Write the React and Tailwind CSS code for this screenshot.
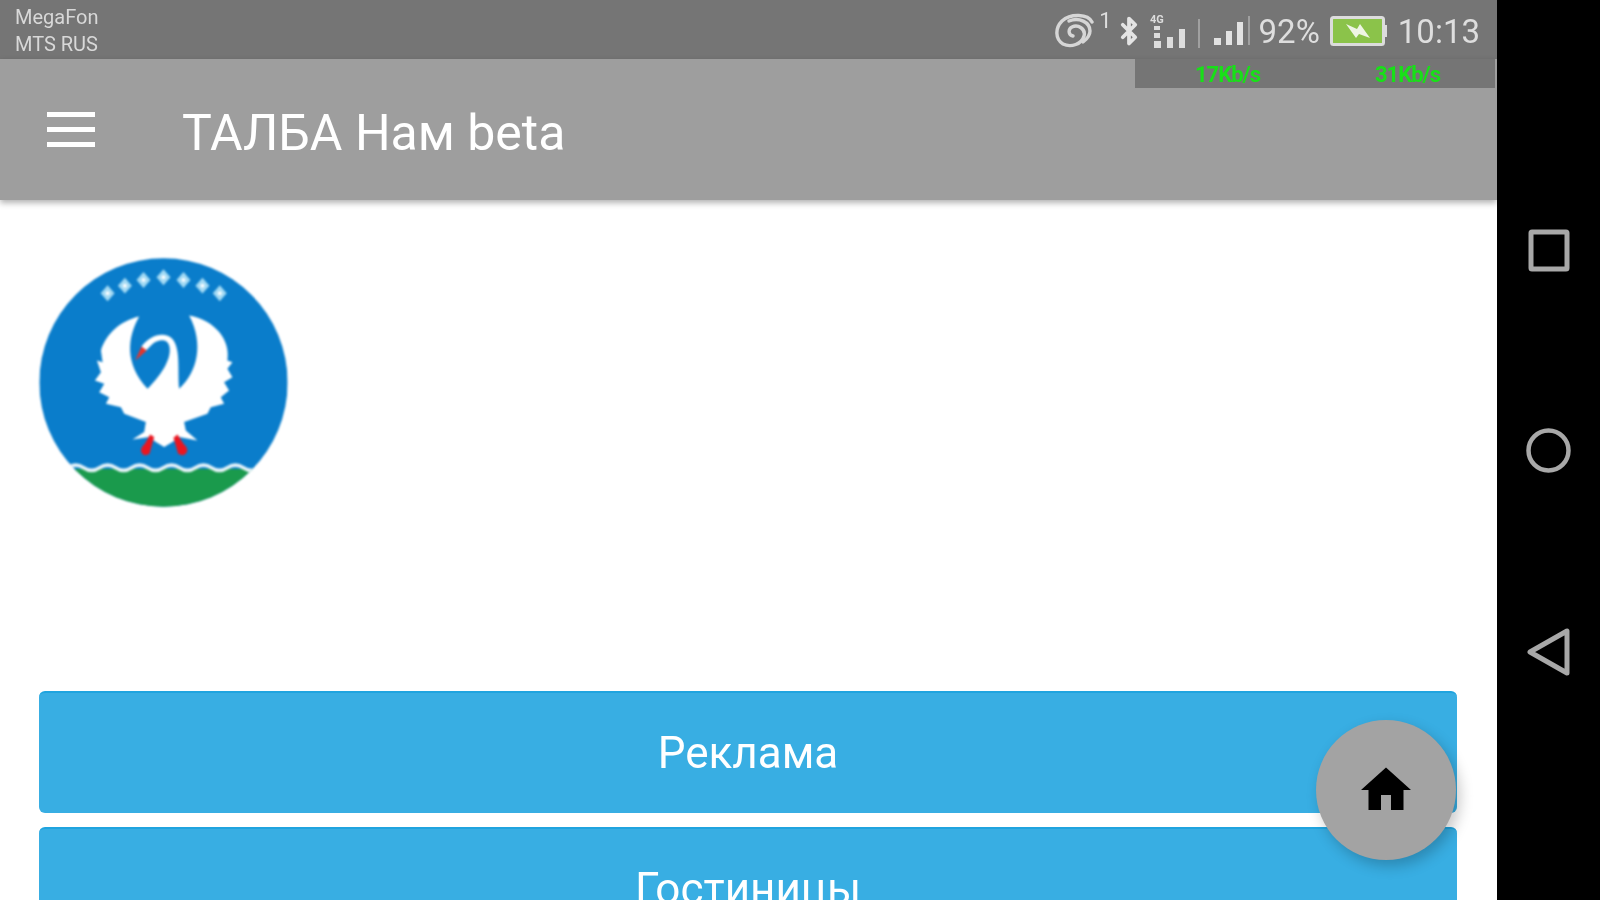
import { Bluetooth } from "lucide-react";

const diamonds = [
  [260, 158],
  [312, 135],
  [368, 118],
  [428, 110],
  [488, 118],
  [545, 135],
  [597, 158],
];

function Emblem() {
  return (
    <svg viewBox="55 52 746 748" className="w-[249px] h-[249px] shrink-0 blur-[0.8px]">
      <defs>
        <clipPath id="disc">
          <circle cx="428" cy="426" r="373" />
        </clipPath>
      </defs>
      <g clipPath="url(#disc)">
        <rect x="55" y="52" width="746" height="748" fill="#0a7dcb" />
        <rect x="55" y="686" width="746" height="120" fill="#1a9a4c" />
        <path
          d="M140 682q24-16 48 0t48 0 48 0 48 0 48 0 48 0 48 0 48 0 48 0 48 0 48 0 48 0 48 0"
          fill="none"
          stroke="#e8f4fa"
          strokeWidth="11"
        />
      </g>
      {diamonds.map(([x, y]) => (
        <g key={x}>
          <path d={`M${x} ${y - 24}L${x + 21} ${y}L${x} ${y + 24}L${x - 21} ${y}Z`} fill="#a3daf4" />
          <circle cx={x} cy={y} r="6" fill="#ffffff" />
        </g>
      ))}
      <path
        d="M355 228C300 240 255 280 240 330L245 365L228 360L240 395L222 420L250 430L235 455L265 470L255 490L300 500L310 520L375 545L370 575L335 597L385 590L405 605L430 620L455 605L475 590L530 600L495 570L490 545L560 520L570 500L610 490L600 470L625 450L610 425L635 410L620 385L635 365L620 360C630 300 585 240 505 225C550 310 530 395 475 445C470 390 480 325 455 295C430 270 385 285 362 318L370 335L395 310C415 295 440 295 445 315C455 350 425 400 380 445C310 370 320 290 355 228Z"
        fill="#ffffff"
      />
      <path d="M362 318L343 360L378 330Z" fill="#e5352c" />
      <path d="M388 582L400 590L386 640Q366 652 360 630Q362 618 372 610Z" fill="#ea1620" />
      <path d="M470 582L458 592L472 640Q492 652 500 630Q498 618 488 610Z" fill="#ea1620" />
    </svg>
  );
}

function HomeIcon() {
  return (
    <svg viewBox="0 0 24 24" className="w-[60px] h-[60px]" fill="#000000">
      <path d="M10 20v-6h4v6h5v-8h3L12 3 2 12h3v8z" />
    </svg>
  );
}

function SyncIcon() {
  return (
    <svg viewBox="0 0 40 36" className="w-[40px] h-[36px]" fill="none" stroke="#d6d6d6" strokeWidth="3.4" strokeLinecap="round">
      <path d="M37 9C33 1 16 0 7 8C0 15 0 26 8 31C16 35 27 31 29 23C31 16 23 11 17 14C13 16 13 22 18 23" />
      <path d="M14 8C24 4 35 9 35 18C35 22 32 26 28 29" />
    </svg>
  );
}

function SimSignal() {
  return (
    <svg viewBox="0 0 52 36" className="w-[52px] h-[36px]" fill="#dddddd">
      <text x="0" y="10" fontSize="11" fontWeight="700" fontFamily="Roboto, sans-serif">4G</text>
      <rect x="4" y="13" width="6" height="4" />
      <rect x="4" y="20" width="6" height="5" />
      <rect x="4" y="28" width="7" height="7" />
      <rect x="17" y="24" width="6" height="11" />
      <rect x="29" y="16" width="6" height="19" />
      <rect x="48" y="6" width="2" height="29" fill="#a0a0a0" />
    </svg>
  );
}

function Signal() {
  return (
    <svg viewBox="0 0 37 30" className="w-[37px] h-[30px]" fill="#e2e2e2">
      <rect x="0" y="22" width="7" height="7" />
      <rect x="12" y="15" width="6" height="14" />
      <rect x="23" y="6" width="6" height="23" />
      <rect x="34" y="0" width="2" height="29" fill="#a0a0a0" />
    </svg>
  );
}

function Battery() {
  return (
    <svg viewBox="0 0 58 30" className="w-[58px] h-[30px]">
      <rect x="1.5" y="1.5" width="52" height="27" rx="2" fill="#8bc34a" stroke="#dcdcdc" strokeWidth="3" />
      <rect x="54" y="9" width="3" height="12" fill="#dcdcdc" />
      <path d="M16 8L27 13L30 8L40 22L29 18L26 22Z" fill="#eef5e4" />
    </svg>
  );
}

function Wide({ children, top }) {
  return (
    <button
      className={`h-[122px] w-full shrink-0 rounded-md bg-[#38aee3] border-t-2 border-[#1fa4df] text-white text-[44px] leading-none blur-[0.3px] ${top}`}
    >
      {children}
    </button>
  );
}

export default function App() {
  return (
    <div className="flex h-screen w-full overflow-hidden bg-black font-['Roboto',sans-serif]">
      <div className="relative flex w-[1497px] shrink-0 flex-col bg-white">
        {/* status bar */}
        <div className="flex h-[59px] shrink-0 items-center justify-between bg-[#757575] pl-[15px] pr-[17px] pt-[3px] blur-[0.7px]">
          <div className="text-[20px] leading-[27px] text-[#d8d8d8]">
            <div>MegaFon</div>
            <div>MTS RUS</div>
          </div>
          <div className="flex items-center text-[#dedede]">
            <SyncIcon />
            <span className="mb-[20px] ml-[4px] text-[22px] leading-none">1</span>
            <Bluetooth className="ml-[2px] h-[40px] w-[30px]" strokeWidth={3} color="#e4e4e4" />
            <div className="ml-[6px]"><SimSignal /></div>
            <div className="ml-[12px]"><Signal /></div>
            <span className="ml-[8px] text-[33px] leading-none">92%</span>
            <div className="ml-[10px]"><Battery /></div>
            <span className="ml-[10px] text-[33px] leading-none">10:13</span>
          </div>
        </div>

        {/* app bar */}
        <div className="relative z-10 flex h-[141px] shrink-0 items-center bg-[#9e9e9e] pl-[47px] shadow-[0_3px_6px_rgba(0,0,0,0.3)]">
          <div className="flex w-[48px] flex-col gap-[10px] blur-[0.5px]">
            <div className="h-[5px] bg-white" />
            <div className="h-[5px] bg-white" />
            <div className="h-[5px] bg-white" />
          </div>
          <h1 className="ml-[87px] mt-[6px] text-[50px] font-normal leading-none text-white blur-[0.5px]">
            ТАЛБА Нам beta
          </h1>
          <div className="absolute right-[2px] top-0 flex h-[29px] w-[360px] items-center bg-[#757575] pl-[60px] pt-[2px] text-[22px] font-bold leading-none tracking-[-1px] text-[#18e018] blur-[0.7px]">
            <span className="w-[180px]">17Kb/s</span>
            <span>31Kb/s</span>
          </div>
        </div>

        {/* content */}
        <div className="flex min-h-0 flex-1 flex-col overflow-hidden pl-[39px] pr-[40px] pt-[58px]">
          <Emblem />
          <Wide top="mt-[184px]">Реклама</Wide>
          <Wide top="mt-[14px]">Гостиницы</Wide>
        </div>

        <button className="absolute left-[1316px] top-[720px] z-20 flex h-[140px] w-[140px] items-center justify-center rounded-full bg-[#a3a3a3] shadow-[4px_6px_14px_rgba(0,0,0,0.22)]">
          <HomeIcon />
        </button>
      </div>

      {/* android nav */}
      <div className="flex flex-1 flex-col items-center justify-center gap-[155px] bg-black pt-[3px] blur-[0.6px]">
        <svg viewBox="0 0 45 45" className="h-[45px] w-[45px]" fill="none" stroke="#a8a8a8" strokeWidth="5">
          <rect x="5" y="4" width="36" height="37" rx="1" />
        </svg>
        <svg viewBox="0 0 45 45" className="h-[45px] w-[45px]" fill="none" stroke="#a8a8a8" strokeWidth="4.5">
          <circle cx="22.5" cy="22.5" r="20" />
        </svg>
        <svg viewBox="0 0 45 48" className="h-[48px] w-[45px]" fill="none" stroke="#a8a8a8" strokeWidth="5" strokeLinejoin="round">
          <path d="M41 3V45L4 24Z" />
        </svg>
      </div>
    </div>
  );
}
